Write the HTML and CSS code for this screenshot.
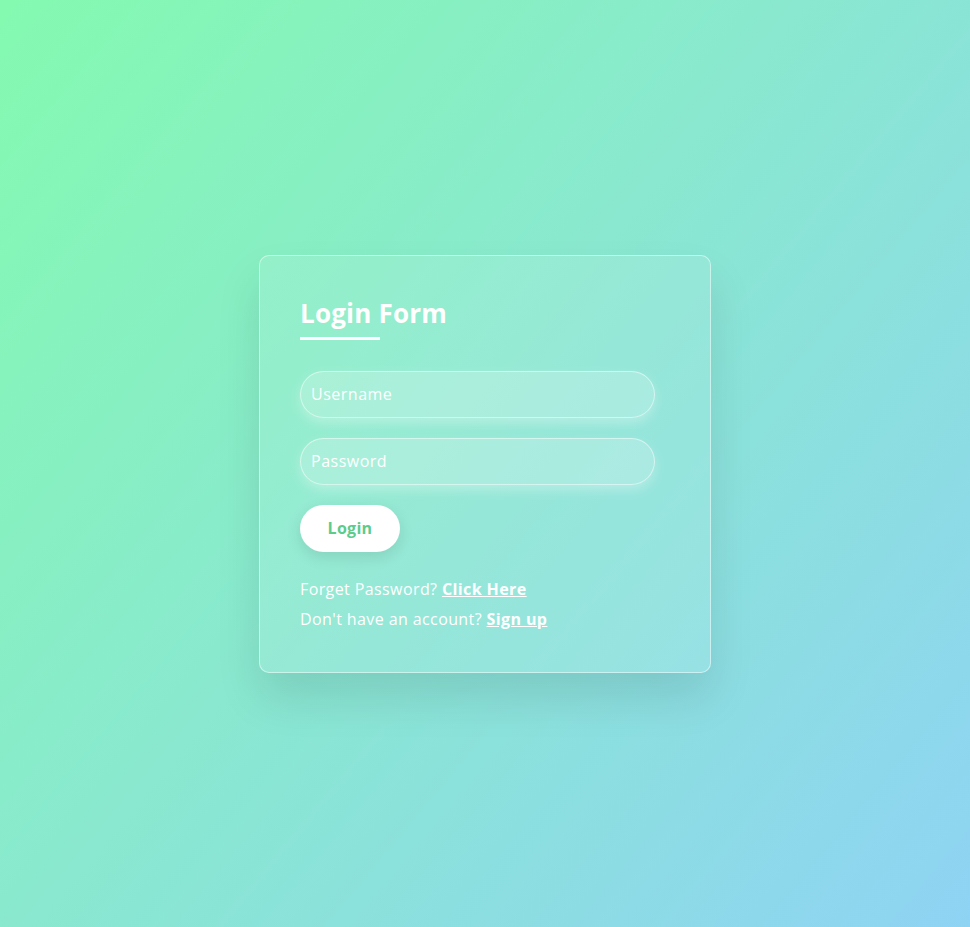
FILE: index.html
```html
<!DOCTYPE html>
<html lang="en">
<head>
<meta charset="utf-8">
<title>Login Form</title>
<link rel="stylesheet" href="styles.css">
</head>
<body>
<main class="page">
  <section class="card">
    <h2 class="title">Login Form</h2>
    <form class="form">
      <input class="field" type="text" placeholder="Username">
      <input class="field" type="password" placeholder="Password">
      <button class="btn" type="button">Login</button>
    </form>
    <div class="links">
      <p class="line">Forget Password? <a href="#" class="link">Click Here</a></p>
      <p class="line">Don't have an account? <a href="#" class="link">Sign up</a></p>
    </div>
  </section>
</main>
</body>
</html>
```

FILE: styles.css
```css
* { box-sizing: border-box; }
html, body { margin: 0; padding: 0; }
body {
  font-family: "Open Sans", "Noto Sans", sans-serif;
  color: #fff;
  background: linear-gradient(130deg, #84fab0 0%, #8fd3f4 100%);
  min-height: 100vh;
}
.page {
  min-height: 100vh;
  display: flex;
  align-items: center;
  justify-content: center;
}
.card {
  width: 452px;
  padding: 40px 40px 38px;
  border: 1px solid rgba(255,255,255,0.5);
  border-radius: 10px;
  background: rgba(255,255,255,0.1);
  box-shadow: 0 25px 45px rgba(0,0,0,0.1);
}
.title {
  margin: 0;
  font-size: 26px;
  line-height: 35px;
  font-weight: 700;
  letter-spacing: 0.2px;
}
.title::after {
  content: "";
  display: block;
  width: 80px;
  height: 3px;
  margin-top: 6px;
  background: #fff;
}
.form {
  margin-top: 31px;
  display: flex;
  flex-direction: column;
  align-items: flex-start;
  gap: 20px;
}
.field {
  width: 355px;
  height: 47px;
  padding: 0 10px;
  border: 1px solid rgba(255,255,255,0.5);
  border-radius: 24px;
  background: rgba(255,255,255,0.2);
  box-shadow: 0 5px 12px rgba(255,255,255,0.3);
  font-family: inherit;
  font-size: 16px;
  letter-spacing: 0.5px;
  color: #fff;
  outline: none;
}
.field::placeholder { color: #fff; opacity: 1; }
.btn {
  width: 100px;
  height: 47px;
  border: none;
  border-radius: 24px;
  background: #fff;
  color: #5ccb8c;
  font-family: inherit;
  font-size: 16px;
  font-weight: 700;
  letter-spacing: 0.3px;
  box-shadow: 0 5px 15px rgba(0,0,0,0.1);
  cursor: pointer;
}
.links { margin-top: 22px; }
.line {
  margin: 0;
  font-size: 16px;
  line-height: 30px;
  letter-spacing: 0.4px;
}
.link {
  color: #fff;
  font-weight: 700;
  text-decoration: underline;
}
```
